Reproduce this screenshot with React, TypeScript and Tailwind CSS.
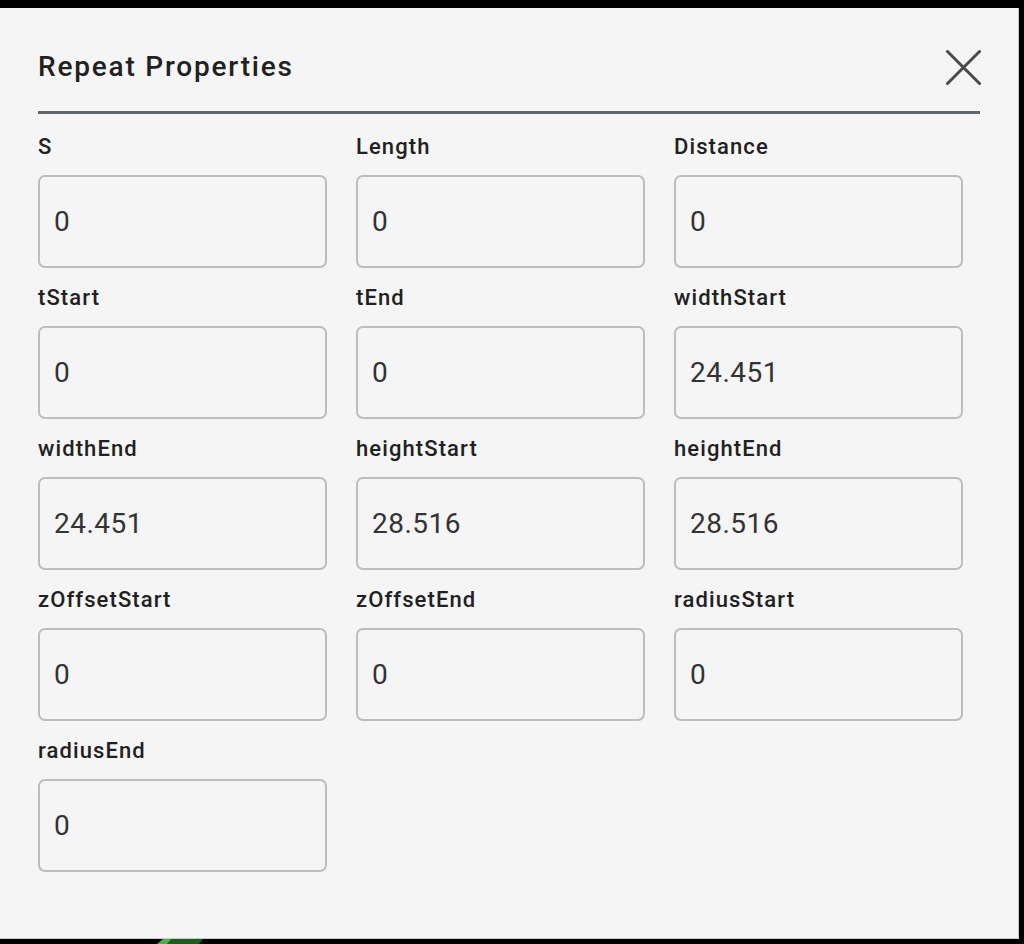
import React from "react";

const fields: { label: string; value: string }[] = [
  { label: "S", value: "0" },
  { label: "Length", value: "0" },
  { label: "Distance", value: "0" },
  { label: "tStart", value: "0" },
  { label: "tEnd", value: "0" },
  { label: "widthStart", value: "24.451" },
  { label: "widthEnd", value: "24.451" },
  { label: "heightStart", value: "28.516" },
  { label: "heightEnd", value: "28.516" },
  { label: "zOffsetStart", value: "0" },
  { label: "zOffsetEnd", value: "0" },
  { label: "radiusStart", value: "0" },
  { label: "radiusEnd", value: "0" },
];

function Field({ label, value }: { label: string; value: string }) {
  return (
    <div className="flex flex-col">
      <label className="h-[26px] text-[22px] leading-[26px] font-medium tracking-[1.1px] text-[#212121]">
        {label}
      </label>
      <input
        readOnly
        value={value}
        className="mt-[15px] h-[93px] w-full rounded-[7px] border-2 border-[#bdbdbd] bg-[#f5f5f5] pl-[14px] text-[28px] tracking-[0.5px] text-[#333333] outline-none"
        style={{ fontFamily: "Roboto, 'Liberation Sans', sans-serif" }}
      />
    </div>
  );
}

export default function App() {
  return (
    <div
      className="relative w-[1024px] h-[944px] overflow-hidden bg-black pt-[8px]"
      style={{ fontFamily: "Roboto, 'Liberation Sans', sans-serif" }}
    >
      {/* Dialog */}
      <div className="flex h-[931px] w-[1019px] flex-col border-r border-b border-[#c8c8c8] bg-[#f5f5f5] px-[38px] pt-[42px]">
        {/* Header */}
        <div className="flex h-[34px] items-center justify-between">
          <h2 className="text-[28px] leading-[34px] font-medium tracking-[1.8px] text-[#212121]">
            Repeat Properties
          </h2>
          <button type="button" className="mr-[-1px] text-[#4a4a4a]">
            <svg width="35" height="35" viewBox="0 0 35 35" fill="none">
              <path
                d="M1.5 1.5 L33.5 33.5 M33.5 1.5 L1.5 33.5"
                stroke="currentColor"
                strokeWidth="3"
                strokeLinecap="round"
              />
            </svg>
          </button>
        </div>
        <div className="mt-[27px] h-[3px] bg-[#61666b]" />

        {/* Fields */}
        <div className="mt-[20px] grid grid-cols-[289px_289px_289px] gap-x-[29px] gap-y-[17px]">
          {fields.map((f) => (
            <Field key={f.label} label={f.label} value={f.value} />
          ))}
        </div>
      </div>

      {/* Peek of content behind the dialog */}
      <svg
        className="absolute left-[155px] top-[939px]"
        width="50"
        height="5"
        viewBox="0 0 50 5"
      >
        <polygon points="4,5 9,0 48,0 44,5" fill="#1b5e20" />
        <polygon points="2,5 8,0 16,0 12,5" fill="#4caf50" />
      </svg>
    </div>
  );
}
